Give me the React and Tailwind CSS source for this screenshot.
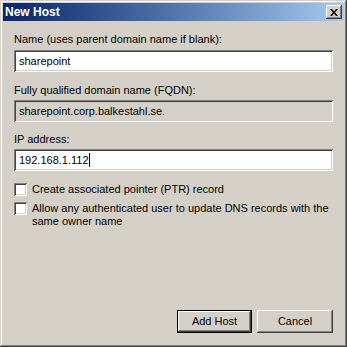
import React from 'react';

const sunken =
  'shadow-[inset_1px_1px_0_#808080,inset_-1px_-1px_0_#ffffff,inset_2px_2px_0_#404040,inset_-2px_-2px_0_#d4d0c8]';
const raised =
  'shadow-[inset_-1px_-1px_0_#404040,inset_1px_1px_0_#ffffff,inset_-2px_-2px_0_#808080,inset_2px_2px_0_#d4d0c8]';

function Field({ value, readOnly, caret }) {
  return (
    <div
      className={`h-[22px] flex items-center pl-[5px] ${sunken} ${readOnly ? 'bg-[#d4d0c8]' : 'bg-white'}`}
    >
      <span className="leading-[13px] text-black">{value}</span>
      {caret && <span className="w-px h-[14px] bg-black" />}
    </div>
  );
}

function Checkbox({ children }) {
  return (
    <div className="flex items-start gap-[5px]">
      <div className={`w-[13px] h-[13px] shrink-0 bg-white ${sunken}`} />
      <div className="leading-[13px] text-black">{children}</div>
    </div>
  );
}

export default function App() {
  return (
    <div
      className="w-[347px] h-[347px] bg-[#d4d0c8] p-[3px] flex flex-col shadow-[inset_-1px_-1px_0_#404040,inset_1px_1px_0_#d4d0c8,inset_-2px_-2px_0_#808080,inset_2px_2px_0_#ffffff]"
      style={{ fontFamily: '"Liberation Sans", Arial, sans-serif' }}
    >
      {/* title bar */}
      <div className="h-[18px] flex items-center justify-between pl-[2px] pr-[2px] bg-gradient-to-r from-[#0a246a] to-[#a6caf0]">
        <span className="text-white font-bold text-[12px] leading-[18px]">New Host</span>
        <button className={`w-[16px] h-[14px] bg-[#d4d0c8] flex items-center justify-center ${raised}`}>
          <svg width="8" height="7" viewBox="0 0 8 7">
            <path d="M0 0h2l2 2.5L6 0h2L5 3.5 8 7H6L4 4.5 2 7H0l3-3.5z" fill="#000" />
          </svg>
        </button>
      </div>

      <div className="flex-1 flex flex-col px-[11px] text-[11px]">
        <div className="mt-[12px] leading-[13px] text-black">Name (uses parent domain name if blank):</div>
        <div className="mt-[4px]">
          <Field value="sharepoint" />
        </div>

        <div className="mt-[12px] leading-[13px] text-black">Fully qualified domain name (FQDN):</div>
        <div className="mt-[3px]">
          <Field value="sharepoint.corp.balkestahl.se." readOnly />
        </div>

        <div className="mt-[11px] leading-[13px] text-black">IP address:</div>
        <div className="mt-[3px]">
          <Field value="192.168.1.112" caret />
        </div>

        <div className="mt-[12px] flex flex-col gap-[6px]">
          <Checkbox>Create associated pointer (PTR) record</Checkbox>
          <Checkbox>
            Allow any authenticated user to update DNS records with the
            <br />
            same owner name
          </Checkbox>
        </div>

        <div className="flex-1" />

        <div className="flex justify-end gap-[5px] mb-[11px]">
          <button className="w-[75px] h-[23px] border border-black bg-[#d4d0c8] shadow-[inset_-1px_-1px_0_#404040,inset_1px_1px_0_#ffffff,inset_-2px_-2px_0_#808080] text-black leading-[13px]">
            Add Host
          </button>
          <button className={`w-[76px] h-[23px] bg-[#d4d0c8] ${raised} text-black leading-[13px]`}>
            Cancel
          </button>
        </div>
      </div>
    </div>
  );
}
